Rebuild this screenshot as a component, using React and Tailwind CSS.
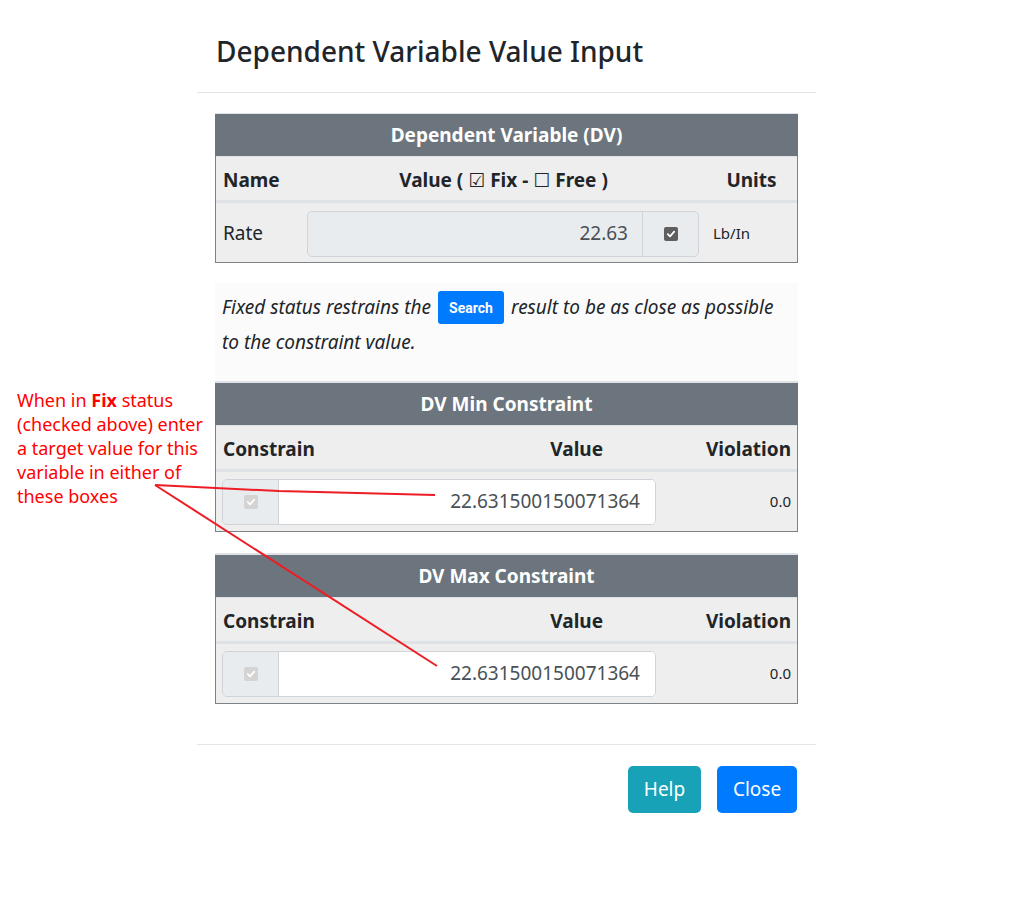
import React from "react";

function Check({ disabled }) {
  return (
    <span
      className={
        "inline-flex items-center justify-center w-[14px] h-[14px] rounded-[2px] " +
        (disabled ? "bg-[#d4d4d4]" : "bg-[#5f5f5f]")
      }
    >
      <svg width="10" height="10" viewBox="0 0 10 10">
        <path d="M1.8 5.2 L4 7.3 L8.2 2.6" fill="none" stroke="white" strokeWidth="1.8" strokeLinecap="round" strokeLinejoin="round" />
      </svg>
    </span>
  );
}

function GrayHeader({ children }) {
  return (
    <div className="h-[42px] bg-[#6c757d] text-white font-bold text-[19px] flex items-center justify-center">
      {children}
    </div>
  );
}

function ConstraintTable({ title }) {
  return (
    <div className="border-t-2 border-[#dee2e6]">
      <GrayHeader>{title}</GrayHeader>
      <div className="border-x border-b border-[#7d8287] bg-[#eeeeee]">
        <div className="h-[47px] pt-[3px] flex items-center font-bold text-[19px] border-t border-[#dee2e6] border-b-[3px] border-b-[#dee2e6]">
          <div className="flex-1 pl-[7px]">Constrain</div>
          <div className="pr-[7px]">Value</div>
          <div className="w-[187px] text-right pr-[6px]">Violation</div>
        </div>
        <div className="h-[59px] flex items-center">
          <div className="ml-[6px] w-[434px] h-[46px] border border-[#ced4da] rounded-[5px] flex overflow-hidden">
            <div className="w-[56px] bg-[#e9ecef] border-r border-[#ced4da] flex items-center justify-center">
              <Check disabled />
            </div>
            <div className="flex-1 bg-white flex items-center justify-end pr-[15px] text-[19px] text-[#495057]">
              22.631500150071364
            </div>
          </div>
          <div className="flex-1 text-right pr-[6px] text-[15px]">0.0</div>
        </div>
      </div>
    </div>
  );
}

export default function App() {
  return (
    <div className="relative w-[1024px] h-[900px] bg-white text-[#212529] font-['Noto_Sans','DejaVu_Sans',sans-serif]">
      <div className="ml-[197px] w-[619px] pt-[11px]">
        <div className="h-[82px] border-b border-[#e5e5e5] px-[19px] flex items-center">
          <h4 className="text-[28px] font-medium leading-tight">Dependent Variable Value Input</h4>
        </div>
        <div className="px-[18px] pt-[20px] pb-[40px]">
          <div className="border-t border-[#dee2e6]">
            <GrayHeader>Dependent Variable (DV)</GrayHeader>
            <div className="border-x border-b border-[#7d8287] bg-[#eeeeee]">
              <div className="h-[47px] pt-[3px] flex items-center font-bold text-[19px] border-t border-[#dee2e6] border-b-[3px] border-b-[#dee2e6]">
                <div className="w-[85px] pl-[7px]">Name</div>
                <div className="w-[405px] text-center">
                  Value ( <span className="font-normal font-['DejaVu_Sans']">☑</span> Fix - <span className="font-normal font-['DejaVu_Sans']">☐</span> Free )
                </div>
                <div className="flex-1 text-center">Units</div>
              </div>
              <div className="h-[59px] pt-[2px] flex items-center">
                <div className="w-[85px] pl-[7px] text-[19px]">Rate</div>
                <div className="w-[405px] pl-[6px] pr-[7px]">
                  <div className="h-[46px] border border-[#ced4da] rounded-[5px] flex overflow-hidden bg-[#e9ecef]">
                    <div className="flex-1 flex items-center justify-end pr-[14px] text-[19px] text-[#495057]">22.63</div>
                    <div className="w-[56px] border-l border-[#ced4da] flex items-center justify-center">
                      <Check />
                    </div>
                  </div>
                </div>
                <div className="flex-1 pl-[7px] text-[15px]">Lb/In</div>
              </div>
            </div>
          </div>

          <div className="mt-[20px] bg-[#fbfbfb] h-[98px] px-[7px] pt-[7px] italic text-[19px] leading-[35px]">
            <div className="flex items-center h-[35px]">
              <span>Fixed status restrains the</span>
              <span className="ml-[7px] mr-[7px] inline-flex items-center justify-center w-[66px] h-[33px] rounded-[3px] bg-[#007bff] text-white not-italic font-bold text-[14px] leading-none font-['Roboto',sans-serif]">
                Search
              </span>
              <span>result to be as close as possible</span>
            </div>
            <div>to the constraint value.</div>
          </div>

          <ConstraintTable title="DV Min Constraint" />
          <div className="h-[21px]" />
          <ConstraintTable title="DV Max Constraint" />
        </div>
        <div className="border-t border-[#e5e5e5] flex justify-end gap-[16px] px-[19px] pt-[21px]">
          <button className="h-[47px] w-[73px] rounded-[5px] bg-[#17a2b8] text-white text-[19px]">Help</button>
          <button className="h-[47px] w-[80px] rounded-[5px] bg-[#007bff] text-white text-[19px]">Close</button>
        </div>
      </div>

      <div className="absolute left-[17px] top-[388px] text-[#ff0000] text-[18px] leading-[24px] font-['Noto_Sans',sans-serif]">
        <div>
          When in <span className="font-bold">Fix</span> status
        </div>
        <div>(checked above) enter</div>
        <div>a target value for this</div>
        <div>variable in either of</div>
        <div>these boxes</div>
      </div>

      <svg className="absolute left-0 top-0 pointer-events-none" width="1024" height="900">
        <polyline points="155,485 279,491 435,495" fill="none" stroke="#ee1c24" strokeWidth="2" />
        <line x1="155" y1="485" x2="437" y2="666" stroke="#ee1c24" strokeWidth="2" />
      </svg>
    </div>
  );
}
